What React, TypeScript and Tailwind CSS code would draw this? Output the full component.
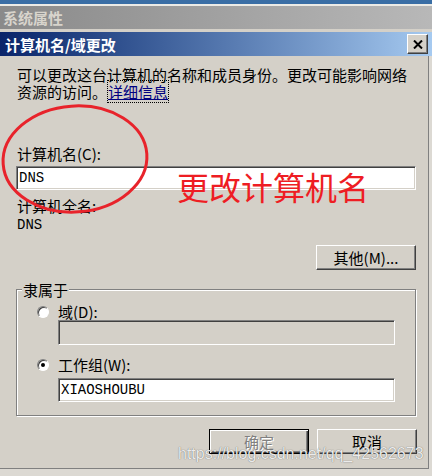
import React from "react";

function Radio({ checked }: { checked?: boolean }) {
  return (
    <span className="flex w-[12px] h-[12px] shrink-0 items-center justify-center rounded-full border border-[#808080] border-r-white border-b-white bg-white shadow-[inset_1px_1px_0_#404040]">
      {checked && <span className="w-[4px] h-[4px] rounded-full bg-black" />}
    </span>
  );
}

function Button({ children, isDefault, disabled }: { children: React.ReactNode; isDefault?: boolean; disabled?: boolean }) {
  const frame = isDefault
    ? "border border-black shadow-[inset_1px_1px_0_#fff,inset_-1px_-1px_0_#404040,inset_-2px_-2px_0_#808080]"
    : "border border-white border-r-[#404040] border-b-[#404040] shadow-[inset_-1px_-1px_0_#808080]";
  return (
    <div
      className={
        "flex w-[100px] h-[25px] items-center justify-center bg-[#d4d0c8] " +
        frame +
        (disabled ? " text-[#808080] [text-shadow:1px_1px_0_#fff]" : " text-black")
      }
    >
      {children}
    </div>
  );
}

export default function App() {
  return (
    <div className="relative w-[432px] h-[476px] overflow-hidden bg-[#dcd9d3] font-['Noto_Sans_CJK_SC',sans-serif] text-black">
      {/* window behind */}
      <div className="h-[4px] bg-[#3a6ea5]" />
      <div className="h-[2px] bg-[#ecebe6]" />
      <div className="flex h-[23px] items-center pl-[3px] bg-linear-to-r from-[#8a8a8a] to-[#b8b8b8] text-[15px] font-bold leading-none text-[#d8d4cc]">
        系统属性
      </div>
      <div className="h-[3px] bg-[#d4d0c8]" />

      {/* dialog title */}
      <div className="flex h-[24px] items-center justify-between pl-[5px] pr-[4px] bg-linear-to-r from-[#0a246a] to-[#a6caf0]">
        <span className="text-[15px] font-bold leading-none text-white">计算机名/域更改</span>
        <div className="flex w-[21px] h-[20px] items-center justify-center bg-[#d4d0c8] border border-white border-r-[#404040] border-b-[#404040] shadow-[inset_-1px_-1px_0_#808080]">
          <svg width="10" height="9" viewBox="0 0 10 9">
            <path d="M1 0.5 L9 8.5 M9 0.5 L1 8.5" stroke="#000" strokeWidth="2" />
          </svg>
        </div>
      </div>

      {/* dialog body */}
      <div className="flex h-[413px] flex-col mr-[3px] border-r border-b border-[#808080] bg-[#d4d0c8] pl-[16px] pr-[12px] pt-[10px] text-[15px] leading-[17px]">
        <p className="pl-[1px]">
          可以更改这台计算机的名称和成员身份。更改可能影响网络
          <br />
          资源的访问。
          <span className="border border-dotted border-black text-[#000080] underline">详细信息</span>
        </p>

        <div className="mt-[45px] pl-[1px]">计算机名(C):</div>
        <div className="mt-[4px] flex h-[24px] items-center bg-white pl-[2px] border border-[#808080] border-r-white border-b-white shadow-[inset_1px_1px_0_#404040,inset_-1px_-1px_0_#d4d0c8] font-['Liberation_Mono',monospace] text-[14px]">
          DNS
        </div>

        <div className="mt-[7px] pl-[1px]">计算机全名:</div>
        <div className="mt-[3px] pl-[1px] font-['Liberation_Mono',monospace] text-[14px]">DNS</div>

        <div className="mt-[11px] self-end">
          <Button>其他(M)...</Button>
        </div>

        {/* member of */}
        <div className="mt-[19px] flex flex-col border border-[#808080] shadow-[inset_1px_1px_0_#fff,1px_1px_0_#fff] pb-[13px]">
          <span className="-mt-[9px] ml-[5px] w-fit bg-[#d4d0c8] px-[1px]">隶属于</span>

          <div className="mt-[5px] flex items-center gap-[9px] pl-[20px]">
            <Radio />
            <span>域(D):</span>
          </div>
          <div className="ml-[41px] h-[25px] w-[337px] bg-[#d4d0c8] border border-[#808080] border-r-white border-b-white shadow-[inset_1px_1px_0_#404040,inset_-1px_-1px_0_#d4d0c8]" />

          <div className="mt-[11px] flex items-center gap-[9px] pl-[20px]">
            <Radio checked />
            <span>工作组(W):</span>
          </div>
          <div className="mt-[5px] ml-[41px] flex h-[24px] w-[337px] items-center bg-white pl-[2px] border border-[#808080] border-r-white border-b-white shadow-[inset_1px_1px_0_#404040,inset_-1px_-1px_0_#d4d0c8] font-['Liberation_Mono',monospace] text-[14px]">
            XIAOSHOUBU
          </div>
        </div>

        <div className="mt-[13px] flex justify-end gap-[8px] -mr-[1px]">
          <Button isDefault disabled>确定</Button>
          <Button>取消</Button>
        </div>
      </div>

      {/* red annotation */}
      <svg className="absolute left-0 top-[100px]" width="160" height="120" viewBox="0 0 160 120">
        <ellipse cx="75" cy="59" rx="72" ry="53" fill="none" stroke="#e8232b" strokeWidth="3" transform="rotate(-4 75 59)" />
      </svg>
      <div className="absolute left-[177px] top-[170px] text-[32px] leading-[32px] text-[#ee1d23]">更改计算机名</div>

      {/* watermark */}
      <div className="absolute left-[178px] top-[446px] font-['Liberation_Sans',sans-serif] text-[16px] leading-[16px] text-[#ebebeb] [text-shadow:0_0_1px_rgba(0,0,0,0.6)]">
        https://blog.csdn.net/qq_42562673
      </div>
    </div>
  );
}
